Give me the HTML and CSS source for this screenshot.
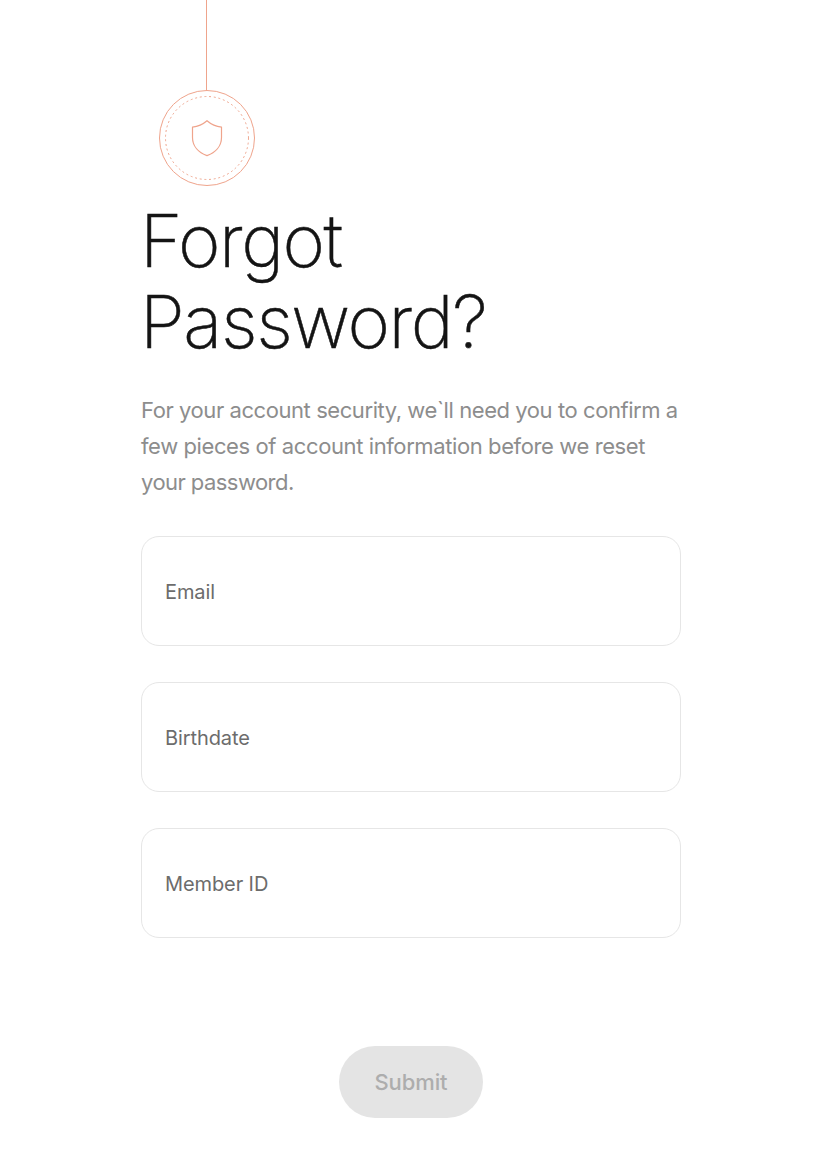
FILE: index.html
```html
<!DOCTYPE html>
<html lang="en">
<head>
<meta charset="utf-8">
<title>Forgot Password</title>
<link rel="stylesheet" href="styles.css">
</head>
<body>
<main class="page">
  <svg class="emblem" width="98" height="187" viewBox="0 0 98 187" fill="none" stroke="#efa48c" aria-hidden="true">
    <path d="M48.500 0V90.500"/>
    <circle cx="49" cy="138" r="47.500"/>
    <circle cx="49" cy="138" r="41.500" stroke-dasharray="1.900 2.800"/>
    <path d="M49 120.800C45 124.300 40.500 126.600 34.500 127.200V137.500C34.500 146 40.500 152.500 49 155.600C57.500 152.500 63.500 146 63.500 137.500V127.200C57.500 126.600 53 124.300 49 120.800Z" stroke-width="1.200"/>
  </svg>
  <h1 class="title"><span class="title-line title-first">Forgot</span><span class="title-line title-second">Password?</span></h1>
  <p class="intro"><span class="line line-a">For your account security, we`ll need you to confirm a</span><span class="line line-b">few pieces of account information before we reset</span><span class="line line-c">your password.</span></p>
  <form class="form">
    <label class="field"><span class="label">Email</span></label>
    <label class="field"><span class="label">Birthdate</span></label>
    <label class="field"><span class="label">Member ID</span></label>
    <button class="submit" type="button" disabled>Submit</button>
  </form>
</main>
</body>
</html>
```
FILE: styles.css
```css
* { box-sizing: border-box; }
body { margin: 0; background: #fff; font-family: Inter, "Liberation Sans", sans-serif; }
.page { width: 540px; height: 1150px; margin-left: 141px; display: flex; flex-direction: column; }
.emblem { display: block; margin-left: 17px; flex: none; }
.title { margin: 13px 0 0; font-size: 72.500px; line-height: 81px; font-weight: 200; color: #141414; -webkit-text-stroke: 0.500px #141414; }
.title-line, .line { display: block; white-space: nowrap; width: max-content; }
.title-first { letter-spacing: -1.500px; }
.title-second { letter-spacing: -1.400px; }
.title-line { margin-left: -1px; }
.intro { margin: 30px 0 0; font-size: 22px; line-height: 36px; color: #8d8d8d; }
.line-a { letter-spacing: -0.430px; }
.line-b { letter-spacing: -0.400px; }
.line-c { letter-spacing: -0.550px; }
.form { margin-top: 36px; display: flex; flex-direction: column; gap: 36px; }
.field { height: 110px; border: 1px solid #e6e6e6; border-radius: 18px; padding: 1px 23px 0; display: flex; align-items: center; font-size: 20px; letter-spacing: -0.100px; color: #6c6c6c; }
.submit { align-self: center; margin-top: 72px; width: 144px; height: 72px; padding: 0; border: 0; border-radius: 36px; background: #e4e4e4; color: #adadad; font: 500 22px Inter, sans-serif; letter-spacing: -0.100px; }
```
